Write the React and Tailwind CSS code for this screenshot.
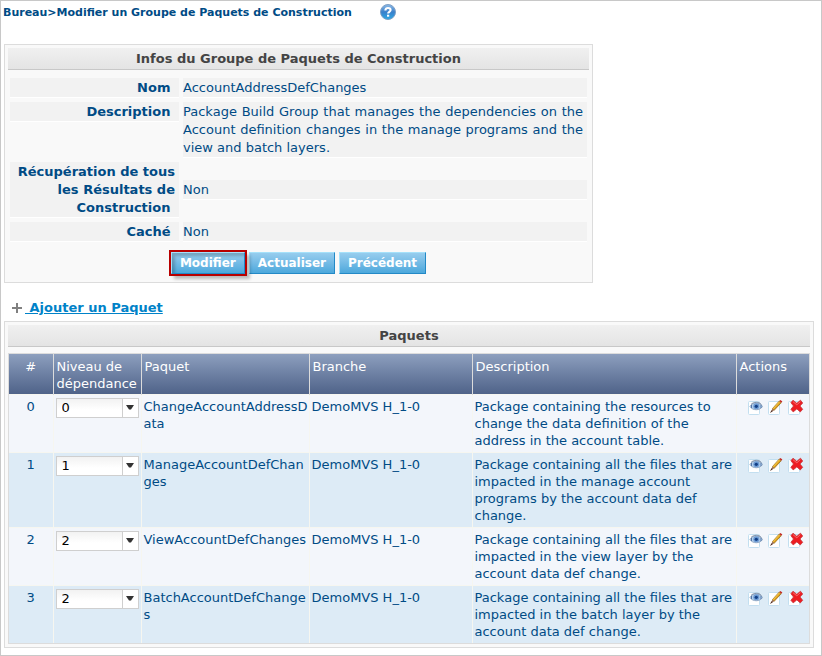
import React from "react";

const packages = [
  {
    level: "0",
    name: "ChangeAccountAddressData",
    branch: "DemoMVS H_1-0",
    description:
      "Package containing the resources to change the data definition of the address in the account table.",
  },
  {
    level: "1",
    name: "ManageAccountDefChanges",
    branch: "DemoMVS H_1-0",
    description:
      "Package containing all the files that are impacted in the manage account programs by the account data def change.",
  },
  {
    level: "2",
    name: "ViewAccountDefChanges",
    branch: "DemoMVS H_1-0",
    description:
      "Package containing all the files that are impacted in the view layer by the account data def change.",
  },
  {
    level: "2",
    name: "BatchAccountDefChanges",
    branch: "DemoMVS H_1-0",
    description:
      "Package containing all the files that are impacted in the batch layer by the account data def change.",
  },
];

const infos = [
  { label: "Nom", value: "AccountAddressDefChanges" },
  {
    label: "Description",
    value:
      "Package Build Group that manages the dependencies on the Account definition changes in the manage programs and the view and batch layers.",
  },
  { label: "Récupération de tous les Résultats de Construction", value: "Non" },
  { label: "Caché", value: "Non" },
];

function HelpIcon() {
  return (
    <svg width="16" height="16" viewBox="0 0 16 16" aria-hidden="true">
      <defs>
        <linearGradient id="help-fill" x1="0" y1="0" x2="0" y2="1">
          <stop offset="0" stopColor="#8dbbe8" />
          <stop offset="0.5" stopColor="#3a80cb" />
          <stop offset="1" stopColor="#2fa9e4" />
        </linearGradient>
      </defs>
      <circle cx="8" cy="8" r="7.5" fill="url(#help-fill)" stroke="#7f9fc4" />
      <path
        d="M5.400 6.400C5.400 4.700 6.500 4 8 4s2.600.8 2.600 2.100c0 1.700-2.500 1.900-2.500 3.500"
        fill="none"
        stroke="#fff"
        strokeWidth="2.100"
      />
      <rect x="7" y="10.700" width="2.200" height="2" fill="#fff" />
    </svg>
  );
}

function IconSheet() {
  return <rect x="0.500" y="2.500" width="11" height="13" rx="1" fill="#fff" stroke="#c3dff0" />;
}

function EyeIcon() {
  return (
    <svg width="16" height="16" viewBox="0 0 16 16" aria-hidden="true">
      <IconSheet />
      <path d="M2 7.500C4.500 3 12 3 14.500 7.500 12 11.800 4.500 11.800 2 7.500Z" fill="#b4d0ee" stroke="#93a9c4" />
      <path d="M3 5.500C5.500 2.600 11 2.600 13.500 5.500" fill="none" stroke="#7c8fa8" />
      <circle cx="8.300" cy="7.300" r="3" fill="#6c9bd4" />
      <circle cx="8.300" cy="7.300" r="1.600" fill="#123f86" />
      <path d="M3.500 6v3M13 6v3" stroke="#5578a8" />
    </svg>
  );
}

function PencilIcon() {
  return (
    <svg width="16" height="16" viewBox="0 0 16 16" aria-hidden="true">
      <IconSheet />
      <path d="M4.500 9.500 11.300 2 13.200 3.700 6.200 11.300Z" fill="#e0a21b" stroke="#8f6416" strokeWidth="0.700" />
      <path d="M5.200 9.600 11.600 2.700" stroke="#f8d45c" strokeWidth="0.900" />
      <path d="M11.300 2 12.400 0.900 14.400 2.500 13.200 3.700Z" fill="#c42a26" />
      <path d="M4.500 9.500 6.200 11.300 2.500 13.500Z" fill="#9a705a" />
      <path d="M3.600 11.300 4.700 12.300 2 13.900Z" fill="#4a2b24" />
    </svg>
  );
}

function DeleteIcon() {
  return (
    <svg width="16" height="16" viewBox="0 0 16 16" aria-hidden="true">
      <IconSheet />
      <path
        d="M5 1.200 8.800 4.300 12.500 1.200 14.700 4 12 7 14.700 10.300 12.300 12.900 8.800 9.900 5.200 12.900 2.900 10.300 5.500 7 2.900 3.700Z"
        fill="#ee1c22"
        stroke="#c5393c"
        strokeWidth="0.800"
      />
      <path d="M5 2.700 8.800 5.800 12.400 2.700" fill="none" stroke="#f7696a" />
    </svg>
  );
}

function Panel({ title, className, children }) {
  return (
    <section className={`border border-[#dcdcdc] bg-[#f9f9f9] px-[3px] pt-[3px] ${className}`}>
      <h2 className="h-[22px] border-b border-[#c8c8c8] bg-linear-to-b from-[#f0f0f0] to-[#e4e4e4] text-center text-[13px] leading-[21px] font-bold text-[#444]">
        {title}
      </h2>
      {children}
    </section>
  );
}

const buttonClass =
  "h-[22px] border border-t-[#a5e1fa] border-r-[#2389c6] border-b-[#2389c6] border-l-[#a5e1fa] bg-linear-to-b from-[#97cdee] to-[#4ba8dc] px-2 text-[12px] leading-[20px] font-bold text-white";

function InfoRow({ label, value }) {
  return (
    <>
      <dt className="self-start border-b border-white bg-[#f2f2f2] pt-px pr-1 text-right font-bold">
        {label}&nbsp;
      </dt>
      <dd className="self-center border-b border-white bg-[#f2f2f2] pt-px pr-1 text-justify">{value}</dd>
    </>
  );
}

function LevelSelect({ index, level }) {
  return (
    <div className="relative h-5 w-[83px]">
      <select
        aria-label={`Niveau de dépendance ${index}`}
        defaultValue={level}
        className="h-5 w-full appearance-none border border-[#cfcfcf] bg-linear-to-b from-[#f2f2f2] to-white to-60% pl-[5px] text-[13px] leading-[18px] text-black"
      >
        <option>0</option>
        <option>1</option>
        <option>2</option>
        <option>3</option>
      </select>
      <span className="pointer-events-none absolute inset-y-px right-px flex w-4 items-center justify-center border-l border-[#cfcfcf] bg-white">
        <svg width="8" height="5" viewBox="0 0 8 5" aria-hidden="true">
          <path d="M0 0h8L5 4.500H3Z" fill="#333" />
        </svg>
      </span>
    </div>
  );
}

export default function App() {
  return (
    <main className="min-h-screen border border-[#c8c8c8] bg-white pr-[7px] pb-1.5 pl-[3px] font-['DejaVu_Sans',Verdana,sans-serif] text-[13px] leading-[18px] text-[#004b85]">
      <header className="flex h-[43px] items-start gap-7 pt-[3px]">
        <h1 className="-ml-px text-[11px] leading-[18px] font-bold">Bureau&gt;Modifier un Groupe de Paquets de Construction</h1>
        <button type="button" aria-label="Aide">
          <HelpIcon />
        </button>
      </header>

      <Panel title="Infos du Groupe de Paquets de Construction" className="max-w-[589px] pb-2">
        <dl className="mx-0.5 mt-2 grid grid-cols-[169px_1fr] gap-1">
          {infos.map((info) => (
            <InfoRow key={info.label} {...info} />
          ))}
        </dl>
        <div className="mt-[10px] flex justify-center gap-1">
          <button
            type="button"
            className={`${buttonClass} relative z-10 shadow-[4px_4px_3px_1px_rgba(0,0,0,0.25)] inset-shadow-[3px_3px_3px_rgba(0,0,0,0.2)] outline-2 outline-[#b80000]`}
          >
            Modifier
          </button>
          <button type="button" className={buttonClass}>
            Actualiser
          </button>
          <button type="button" className={buttonClass}>
            Précédent
          </button>
        </div>
      </Panel>

      <div className="flex h-[38px] items-center pt-3 pl-2">
        <a href="#ajouter" className="flex items-center gap-[3px] font-bold text-[#0082c8]">
          <svg width="10" height="10" viewBox="0 0 10 10" aria-hidden="true">
            <path d="M5 0v10M0 5h10" stroke="#808080" strokeWidth="2" />
          </svg>
          <span className="underline">&nbsp;Ajouter un Paquet</span>
        </a>
      </div>

      <Panel title="Paquets" className="pb-[3px]">
        <div className="mt-1.5 border border-[#dcdcdc]">
          <table className="w-full table-fixed border-collapse text-left leading-[17px]">
            <colgroup>
              <col className="w-[44px]" />
              <col className="w-[88px]" />
              <col className="w-[168px]" />
              <col className="w-[163px]" />
              <col />
              <col className="w-[73px]" />
            </colgroup>
            <thead>
              <tr className="h-10 bg-linear-to-b from-[#8d9fbe] to-[#4f6389] align-top text-white">
                <th className="border-r border-[#dcdcdc] pt-1 text-center font-normal">#</th>
                <th className="border-r border-[#dcdcdc] pt-1 pl-[3px] font-normal">Niveau de dépendance</th>
                <th className="border-r border-[#dcdcdc] pt-1 pl-[3px] font-normal">Paquet</th>
                <th className="border-r border-[#dcdcdc] pt-1 pl-[3px] font-normal">Branche</th>
                <th className="border-r border-[#dcdcdc] pt-1 pl-[3px] font-normal">Description</th>
                <th className="pt-1 pl-[3px] font-normal">Actions</th>
              </tr>
            </thead>
            <tbody>
              {packages.map((pkg, index) => (
                <tr key={pkg.name} className="border-t border-[#f6f6f0] align-top odd:bg-[#f3f6fb] even:bg-[#ddebf6]">
                  <td className="border-r border-[#f6f6f0] py-[3px] text-center">{index}</td>
                  <td className="border-r border-[#f6f6f0] py-[3px] pl-0.5">
                    <LevelSelect index={index} level={pkg.level} />
                  </td>
                  <td className="border-r border-[#f6f6f0] py-[3px] pl-0.5 break-all">{pkg.name}</td>
                  <td className="border-r border-[#f6f6f0] py-[3px] pl-0.5">{pkg.branch}</td>
                  <td className="border-r border-[#f6f6f0] py-[3px] pl-0.5">{pkg.description}</td>
                  <td className="py-1 pl-[11px]">
                    <div className="flex gap-1">
                      <button type="button" aria-label={`Afficher ${pkg.name}`}>
                        <EyeIcon />
                      </button>
                      <button type="button" aria-label={`Modifier ${pkg.name}`}>
                        <PencilIcon />
                      </button>
                      <button type="button" aria-label={`Supprimer ${pkg.name}`}>
                        <DeleteIcon />
                      </button>
                    </div>
                  </td>
                </tr>
              ))}
            </tbody>
          </table>
        </div>
      </Panel>
    </main>
  );
}
